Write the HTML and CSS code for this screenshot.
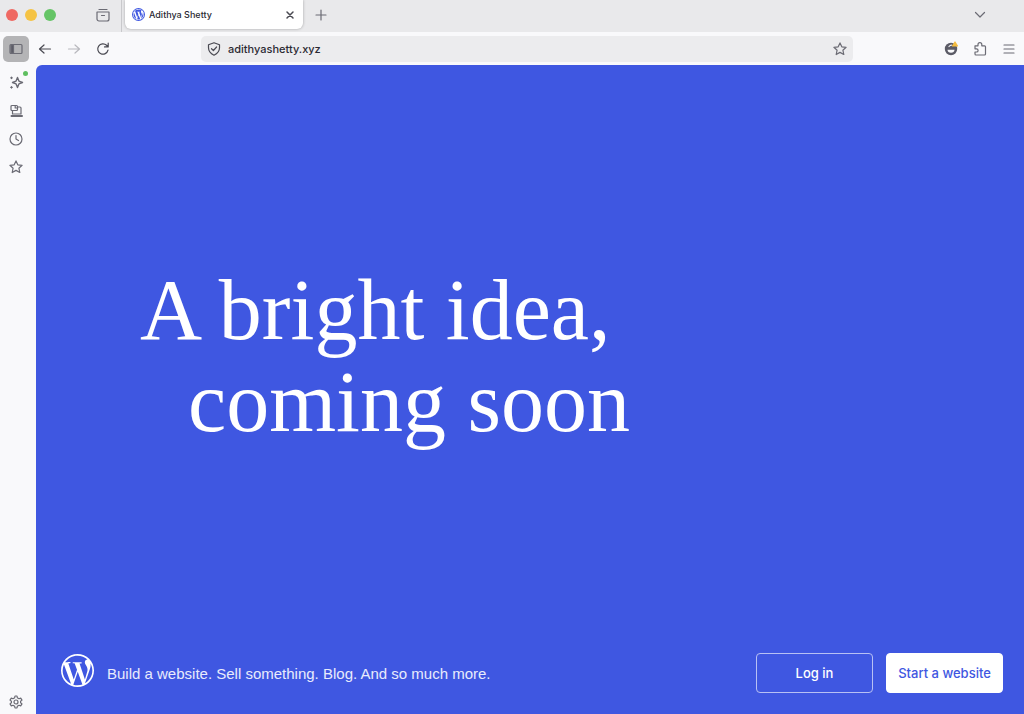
FILE: index.html
```html
<!DOCTYPE html>
<html lang="en">
  <head>
    <meta charset="UTF-8" />
    <meta name="viewport" content="width=device-width, initial-scale=1.0" />
    <title>Adithya Shetty</title>
    <link rel="stylesheet" href="styles.css">
  </head>
  <body>
    <svg class="sprite" aria-hidden="true">
      <symbol id="wordpress" viewBox="0 0 24 24">
        <path d="M21.469 6.825c.84 1.537 1.318 3.3 1.318 5.175 0 3.979-2.156 7.456-5.363 9.325l3.295-9.527c.615-1.54.82-2.771.82-3.864 0-.405-.026-.78-.07-1.11m-7.981.105c.647-.03 1.232-.105 1.232-.105.582-.075.514-.93-.067-.899 0 0-1.755.135-2.88.135-1.064 0-2.85-.15-2.85-.15-.585-.03-.661.855-.075.885 0 0 .54.061 1.125.09l1.68 4.605-2.37 7.08L5.354 6.9c.649-.03 1.234-.1 1.234-.1.585-.075.516-.93-.065-.896 0 0-1.746.138-2.874.138-.2 0-.438-.008-.69-.015C4.911 3.15 8.235 1.215 12 1.215c2.809 0 5.365 1.072 7.286 2.833-.046-.003-.091-.009-.141-.009-1.06 0-1.812.923-1.812 1.914 0 .89.513 1.643 1.06 2.531.411.72.89 1.643.89 2.977 0 .915-.354 1.994-.821 3.479l-1.075 3.585-3.9-11.61.001.014zM12 22.784c-1.059 0-2.081-.153-3.048-.437l3.237-9.406 3.315 9.087c.024.053.05.101.078.149-1.12.393-2.325.607-3.582.607M1.211 12c0-1.564.336-3.05.935-4.39L7.29 21.709C3.694 19.96 1.212 16.271 1.211 12M12 0C5.385 0 0 5.385 0 12s5.385 12 12 12 12-5.385 12-12S18.615 0 12 0" />
      </symbol>
      <symbol id="star" viewBox="0 0 16 16">
        <path d="M8 1.9l1.8 3.9 4.3.5-3.2 2.9.9 4.3L8 11.4l-3.8 2.1.9-4.3-3.2-2.9 4.3-.5z" />
      </symbol>
    </svg>

    <header>
      <div class="tabbar">
        <div class="lights">
          <button class="light red" aria-label="Close window"></button>
          <button class="light yellow" aria-label="Minimize"></button>
          <button class="light green" aria-label="Zoom"></button>
        </div>
        <button class="icon-btn recent" aria-label="Recent browsing">
          <svg class="icon" viewBox="0 0 16 16"><path d="M4 2.5h8M2 5h12v7a2 2 0 0 1-2 2H4a2 2 0 0 1-2-2zM6.5 8.5h3" /></svg>
        </button>
        <div class="tab">
          <svg class="favicon" viewBox="0 0 26 26">
            <circle cx="13" cy="13" r="13" />
            <use class="favicon-mark" href="#wordpress" x="2" y="2" width="22" height="22" />
          </svg>
          <span class="tab-title">Adithya Shetty</span>
          <button class="icon-btn" aria-label="Close tab">
            <svg class="icon dark" viewBox="0 0 16 16"><path d="M5 5l6 6M11 5l-6 6" stroke-width="1.5" /></svg>
          </button>
        </div>
        <button class="icon-btn new-tab" aria-label="New tab">
          <svg class="icon" viewBox="0 0 16 16"><path d="M8 3v10M3 8h10" /></svg>
        </button>
        <button class="icon-btn all-tabs" aria-label="List all tabs">
          <svg class="icon" viewBox="0 0 16 16"><path d="M3.5 5.5L8 10l4.5-4.5" /></svg>
        </button>
      </div>

      <div class="navbar">
        <button class="icon-btn toggle" aria-label="Toggle sidebar">
          <svg class="icon" viewBox="0 0 16 16"><rect x="2" y="3.5" width="12" height="9" rx="1" /><path d="M3 4h2.5v8H3z" fill="#5b5b66" /></svg>
        </button>
        <div class="nav-group">
          <button class="icon-btn" aria-label="Back">
            <svg class="icon dark" viewBox="0 0 16 16"><path d="M13.5 8h-11M7 4L2.5 8 7 12" /></svg>
          </button>
          <button class="icon-btn" aria-label="Forward" disabled>
            <svg class="icon" viewBox="0 0 16 16"><path d="M2.5 8h11M9 4l4.5 4L9 12" /></svg>
          </button>
          <button class="icon-btn" aria-label="Reload">
            <svg class="icon dark" viewBox="0 0 16 16"><path d="M13 9.2A5.2 5.2 0 1 1 11.6 4.3L13.2 5.9M13.2 2.2v3.7H9.5" /></svg>
          </button>
        </div>
        <div class="urlbar">
          <svg class="icon dark" viewBox="0 0 16 16"><path d="M8 1.8l5.5 2v3c0 3.3-2 5.8-5.5 7.4-3.5-1.6-5.5-4.1-5.5-7.4v-3zM5.5 7.7l1.9 1.8 3.2-3.5" /></svg>
          <input class="url" type="text" aria-label="Address" value="adithyashetty.xyz" />
          <button class="icon-btn" aria-label="Bookmark this page">
            <svg class="icon"><use href="#star" /></svg>
          </button>
        </div>
        <div class="nav-group">
          <button class="icon-btn" aria-label="Account">
            <svg class="icon" viewBox="0 0 16 16"><circle cx="8" cy="8" r="6.2" fill="#5b5b66" stroke="none" /><path d="M4.5 8.8h7c0 2-1.4 3-3.5 3s-3.5-1-3.5-3z" fill="#f9f9fb" stroke="none" /><path d="M6 5.5c.8-1 1.6-1.400 2.500-1.400" stroke="#f9f9fb" /><path d="M12 1l2.500 4H9.500z" fill="#f5bd41" stroke="#f5bd41" /></svg>
          </button>
          <button class="icon-btn" aria-label="Extensions">
            <svg class="icon" viewBox="0 0 16 16"><path d="M3 4.8h3V3.6a1.900 1.900 0 0 1 3.800 0v1.200h2.700a1 1 0 0 1 1 1V13a1 1 0 0 1-1 1H4a1 1 0 0 1-1-1v-2h1.500a1.500 1.500 0 0 0 0-3.200H3z" /></svg>
          </button>
          <button class="icon-btn" aria-label="Menu">
            <svg class="icon" viewBox="0 0 16 16"><path d="M3 4h10M3 8h10M3 12h10" /></svg>
          </button>
        </div>
      </div>
    </header>

    <div class="window">
      <nav class="sidebar">
        <button class="icon-btn chatbot" aria-label="AI chatbot">
          <svg class="icon" viewBox="0 0 16 16"><path d="M9.5 2.500l1.400 3.600 3.600 1.400-3.600 1.400-1.400 3.600-1.400-3.600-3.600-1.400 3.600-1.400z" stroke-width="1.400" /><path d="M3.5 2v1.600M2.700 2.800h1.600M3.500 11.500v1.600M2.700 12.300h1.600" /></svg>
          <span class="badge"></span>
        </button>
        <button class="icon-btn" aria-label="Synced tabs">
          <svg class="icon" viewBox="0 0 16 16"><rect x="3" y="2.500" width="6.500" height="5" rx="1" /><path d="M7.200 2.500v2.500h2.300M9.500 4h2.500a1 1 0 0 1 1 1v6H4.500V7.500" /><path d="M3.500 13h10.500" stroke-width="2" /></svg>
        </button>
        <button class="icon-btn" aria-label="History">
          <svg class="icon" viewBox="0 0 16 16"><circle cx="8" cy="8" r="6" /><path d="M8 4.500V8l2.500 1.500" /></svg>
        </button>
        <button class="icon-btn" aria-label="Bookmarks">
          <svg class="icon"><use href="#star" /></svg>
        </button>
        <button class="icon-btn settings" aria-label="Customize sidebar">
          <svg class="icon" viewBox="0 0 16 16"><path d="M6.700 3.700L7 2h2l.3 1.700 1.700 1 1.700-.6 1.300 2-1.400 1.100v1.600l1.400 1.100-1.300 2-1.700-.6-1.700 1L9 14H7l-.3-1.700-1.700-1-1.700.6-1.300-2 1.400-1.100V7.200L2 6.100l1.300-2 1.700.6z" /><circle cx="8" cy="8" r="2" /></svg>
        </button>
      </nav>

      <div class="page">
        <main>
          <h1>A bright idea, <span>coming soon</span></h1>
        </main>
        <footer>
          <svg class="logo" role="img" aria-label="WordPress"><use href="#wordpress" /></svg>
          <p>Build a website. Sell something. Blog. And so much more.</p>
          <a class="btn" href="#login">Log in</a>
          <a class="btn primary" href="#start">Start a website</a>
        </footer>
      </div>
    </div>
  </body>
</html>
```

FILE: styles.css
```css
* {
  box-sizing: border-box;
}
body {
  margin: 0;
  min-height: 100vh;
  display: flex;
  flex-direction: column;
  font-family: Inter, sans-serif;
  background-color: #f9f9fb;
  color: #2b2a33;
}
.sprite {
  display: none;
}

/* icons */
.icon {
  display: block;
  flex: none;
  width: 16px;
  height: 16px;
  fill: none;
  stroke: #6b6b74;
  stroke-width: 1.2;
  stroke-linecap: round;
  stroke-linejoin: round;
}
.icon.dark {
  stroke: #4a4a52;
}
.icon-btn {
  flex: none;
  padding: 0;
  border: none;
  background: none;
  cursor: pointer;
}
.icon-btn:disabled {
  opacity: 0.45;
}

/* tab strip */
.tabbar {
  display: flex;
  align-items: center;
  height: 32px;
  padding: 0 36px 0 6px;
  background-color: #e9e9eb;
}
.tabbar > * {
  margin-bottom: 3px;
}
.lights {
  display: flex;
  gap: 7px;
}
.light {
  width: 12px;
  height: 12px;
  padding: 0;
  border: none;
  border-radius: 50%;
}
.red {
  background-color: #ef6963;
}
.yellow {
  background-color: #f5c344;
}
.green {
  background-color: #65c466;
}
.recent {
  margin-left: 39px;
}
.recent + .tab::before {
  content: "";
  position: absolute;
  left: -4px;
  top: 0;
  width: 1px;
  height: 32px;
  background-color: #c9c9cc;
}
.tab {
  position: relative;
  display: flex;
  align-items: center;
  gap: 4px;
  width: 178px;
  height: 29px;
  margin-left: 14px;
  padding: 0 5px 0 7px;
  border-radius: 0 0 6px 6px;
  background-color: #fff;
  box-shadow: 0 0 3px rgba(0, 0, 0, 0.3);
}
.favicon {
  width: 13px;
  height: 13px;
  fill: #3f57e1;
}
.favicon-mark {
  fill: #fff;
}
.tab-title {
  flex: 1;
  font-size: 9px;
  font-weight: 500;
}
.new-tab {
  margin-left: 10px;
}
.all-tabs {
  margin-left: auto;
}

/* toolbar */
.navbar {
  display: flex;
  align-items: center;
  height: 33px;
  padding: 0 7px 0 3px;
}
.toggle {
  padding: 5px;
  margin-right: 8px;
  border-radius: 5px;
  background-color: #b4b4b6;
}
.nav-group {
  display: flex;
  gap: 13px;
}
.urlbar {
  flex: 1;
  display: flex;
  align-items: center;
  gap: 6px;
  height: 26px;
  margin: 0 90px;
  padding: 0 5px;
  border-radius: 5px;
  background-color: #ececee;
}
.url {
  flex: 1;
  min-width: 0;
  padding: 0;
  border: none;
  background: none;
  outline: none;
  font-family: inherit;
  font-size: 11px;
  font-weight: 500;
  color: #2b2a33;
}

/* sidebar */
.window {
  flex: 1;
  display: flex;
}
.sidebar {
  display: flex;
  flex-direction: column;
  gap: 12px;
  width: 36px;
  padding: 10px 0 4px 8px;
}
.sidebar .icon-btn {
  width: 16px;
}
.chatbot {
  position: relative;
}
.badge {
  position: absolute;
  top: -4px;
  right: -4px;
  width: 5px;
  height: 5px;
  border-radius: 50%;
  background-color: #5fbf60;
}
.settings {
  margin-top: auto;
}

/* page */
.page {
  flex: 1;
  display: flex;
  flex-direction: column;
  border-top-left-radius: 6px;
  background-color: #3f57e1;
  color: #fff;
}
main {
  flex: 1;
  display: flex;
  align-items: center;
  padding: 0 24px 6px 104px;
}
h1 {
  margin: 0;
  font-family: "Liberation Serif", serif;
  font-size: 86px;
  font-weight: 400;
  line-height: 92px;
}
h1 span {
  display: block;
  padding-left: 48px;
}
footer {
  display: flex;
  align-items: center;
  gap: 13px;
  padding: 0 21px 21px 25px;
}
.logo {
  flex: none;
  width: 33px;
  height: 33px;
  margin-bottom: 5px;
  fill: #fff;
}
footer p {
  flex: 1;
  margin: 0;
  font-family: "Liberation Sans", sans-serif;
  font-size: 15px;
  color: #e8ebfc;
}
.btn {
  width: 117px;
  border: 1px solid #b8c1f4;
  border-radius: 4px;
  font-size: 13px;
  font-weight: 500;
  line-height: 38px;
  text-align: center;
  text-decoration: none;
  white-space: nowrap;
  color: #fff;
}
.primary {
  border-color: #fff;
  background-color: #fff;
  color: #3f57e1;
}
```
